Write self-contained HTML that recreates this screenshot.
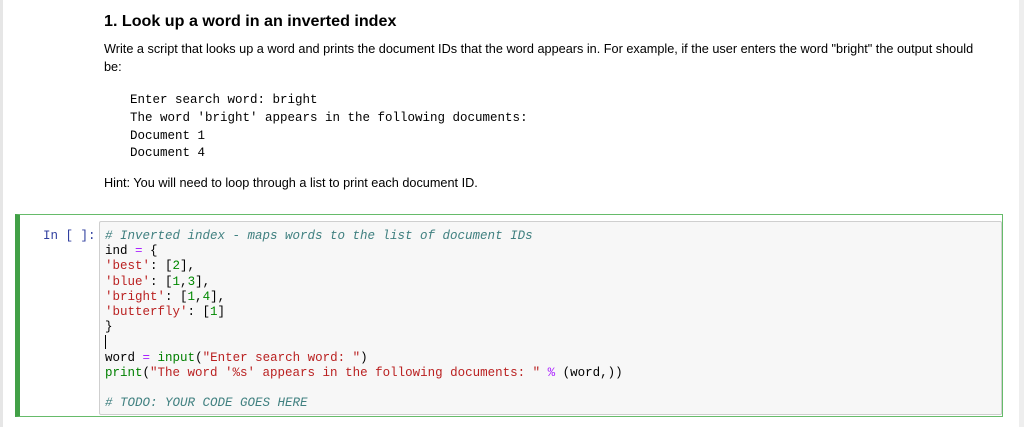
<!DOCTYPE html>
<html><head><style>
body{margin:0;width:1024px;height:427px;background:#fff;position:relative;overflow:hidden;font-family:"Liberation Sans",Arial,sans-serif;color:#000}
.lb{position:absolute;left:0;top:0;width:3px;height:427px;background:#e6e6e6}
.rb{position:absolute;left:1019px;top:0;width:5px;height:427px;background:#eee}
.t{position:absolute;white-space:pre}
h1{position:absolute;left:104px;top:12px;margin:0;font-size:16.1px;font-weight:bold}
.p{font-size:12.7px;left:104px}
.m{font-family:"Liberation Mono",monospace;font-size:12.5px}
.cell{position:absolute;left:15px;top:214px;width:988px;height:203px;border:1px solid #66bb6a;border-left:5px solid #42a047;box-sizing:border-box}
.inp{position:absolute;left:99px;top:221px;width:903px;height:194px;background:#f7f7f7;border:1px solid #cfcfcf;border-radius:2px;box-sizing:border-box}
.code{position:absolute;left:105px;top:229px;line-height:15.2px}
.c{color:#408080;font-style:italic}.s{color:#ba2121}.n{color:#080}.o{color:#aa22ff}.k{color:#008000}
</style></head><body>
<div class="lb"></div><div class="rb"></div>
<h1>1. Look up a word in an inverted index</h1>
<div class="t p" style="top:42px">Write a script that looks up a word and prints the document IDs that the word appears in. For example, if the user enters the word "bright" the output should</div>
<div class="t p" style="top:60px">be:</div>
<div class="t m" style="left:130px;top:92px;line-height:17.8px">Enter search word: bright
The word 'bright' appears in the following documents:
Document 1
Document 4</div>
<div class="t p" style="top:176px">Hint: You will need to loop through a list to print each document ID.</div>
<div class="cell"></div>
<div class="inp"></div>
<div class="t m" style="left:43px;top:229px;color:#303f9f">In [ ]:</div>
<div class="t m code"><span class="c"># Inverted index - maps words to the list of document IDs</span>
ind <span class="o">=</span> {
<span class="s">'best'</span>: [<span class="n">2</span>],
<span class="s">'blue'</span>: [<span class="n">1</span>,<span class="n">3</span>],
<span class="s">'bright'</span>: [<span class="n">1</span>,<span class="n">4</span>],
<span class="s">'butterfly'</span>: [<span class="n">1</span>]
}
<span style="border-left:1px solid #000"> </span>
word <span class="o">=</span> <span class="k">input</span>(<span class="s">"Enter search word: "</span>)
<span class="k">print</span>(<span class="s">"The word '%s' appears in the following documents: "</span> <span class="o">%</span> (word,))

<span class="c"># TODO: YOUR CODE GOES HERE</span></div>
</body></html>
